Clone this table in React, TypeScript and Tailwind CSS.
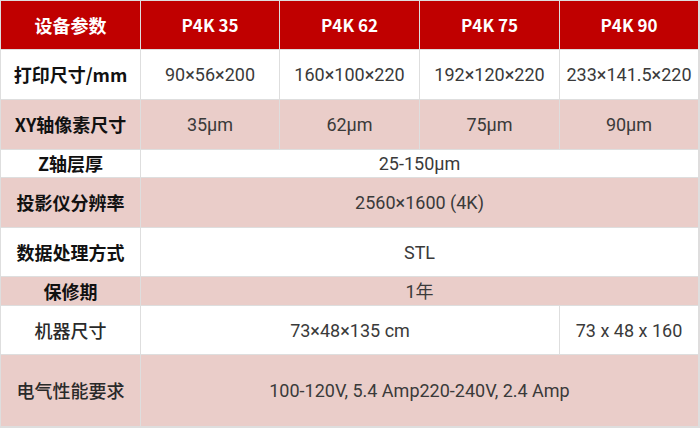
import React from "react";

const cjk = { fontFamily: '"Noto Sans CJK SC", "Noto Sans", sans-serif' };
const latin = { fontFamily: 'Roboto, "Liberation Sans", "Noto Sans CJK SC", sans-serif' };

function Label({ children, pink, bold = true }: { children: React.ReactNode; pink?: boolean; bold?: boolean }) {
  return (
    <div
      style={cjk}
      className={`flex items-center justify-center text-[18px] ${bold ? "font-bold text-[#111]" : "font-medium text-[#2a2a2a]"} ${pink ? "bg-[#eacdc9]" : "bg-white"}`}
    >
      {children}
    </div>
  );
}

function Cell({ children, pink, span }: { children?: React.ReactNode; pink?: boolean; span?: string }) {
  return (
    <div
      style={latin}
      className={`flex items-center justify-center text-[18px] text-[#3a3a3a] ${pink ? "bg-[#eacdc9]" : "bg-white"} ${span ?? ""}`}
    >
      {children}
    </div>
  );
}

export default function App() {
  return (
    <div className="w-[700px] h-[428px] bg-white" style={cjk}>
      <div className="grid grid-cols-[139px_138px_139px_139px_138px] grid-rows-[48px_49px_49px_27px_49px_48px_28px_48px_71px] gap-px p-px pr-[2px] bg-[#dedede] w-[700px] h-[428px]">
        <div className="flex items-center justify-center bg-[#c00000] text-white font-bold text-[18px]">设备参数</div>
        {["P4K 35", "P4K 62", "P4K 75", "P4K 90"].map((t) => (
          <div key={t} className="flex items-center justify-center bg-[#c00000] text-white font-bold text-[17px]">
            {t}
          </div>
        ))}

        <Label>打印尺寸/mm</Label>
        <Cell>90×56×200</Cell>
        <Cell>160×100×220</Cell>
        <Cell>192×120×220</Cell>
        <Cell>233×141.5×220</Cell>

        <Label pink>XY轴像素尺寸</Label>
        <Cell pink>35µm</Cell>
        <Cell pink>62µm</Cell>
        <Cell pink>75µm</Cell>
        <Cell pink>90µm</Cell>

        <Label>Z轴层厚</Label>
        <Cell span="col-span-4">25-150µm</Cell>

        <Label pink>投影仪分辨率</Label>
        <Cell pink span="col-span-4">2560×1600 (4K)</Cell>

        <Label>数据处理方式</Label>
        <Cell span="col-span-4">STL</Cell>

        <Label pink>保修期</Label>
        <Cell pink span="col-span-4">1年</Cell>

        <Label bold={false}>机器尺寸</Label>
        <Cell span="col-span-3">73×48×135 cm</Cell>
        <Cell>73 x 48 x 160</Cell>

        <Label pink bold={false}>电气性能要求</Label>
        <Cell pink span="col-span-4">100-120V, 5.4 Amp220-240V, 2.4 Amp</Cell>
      </div>
    </div>
  );
}
